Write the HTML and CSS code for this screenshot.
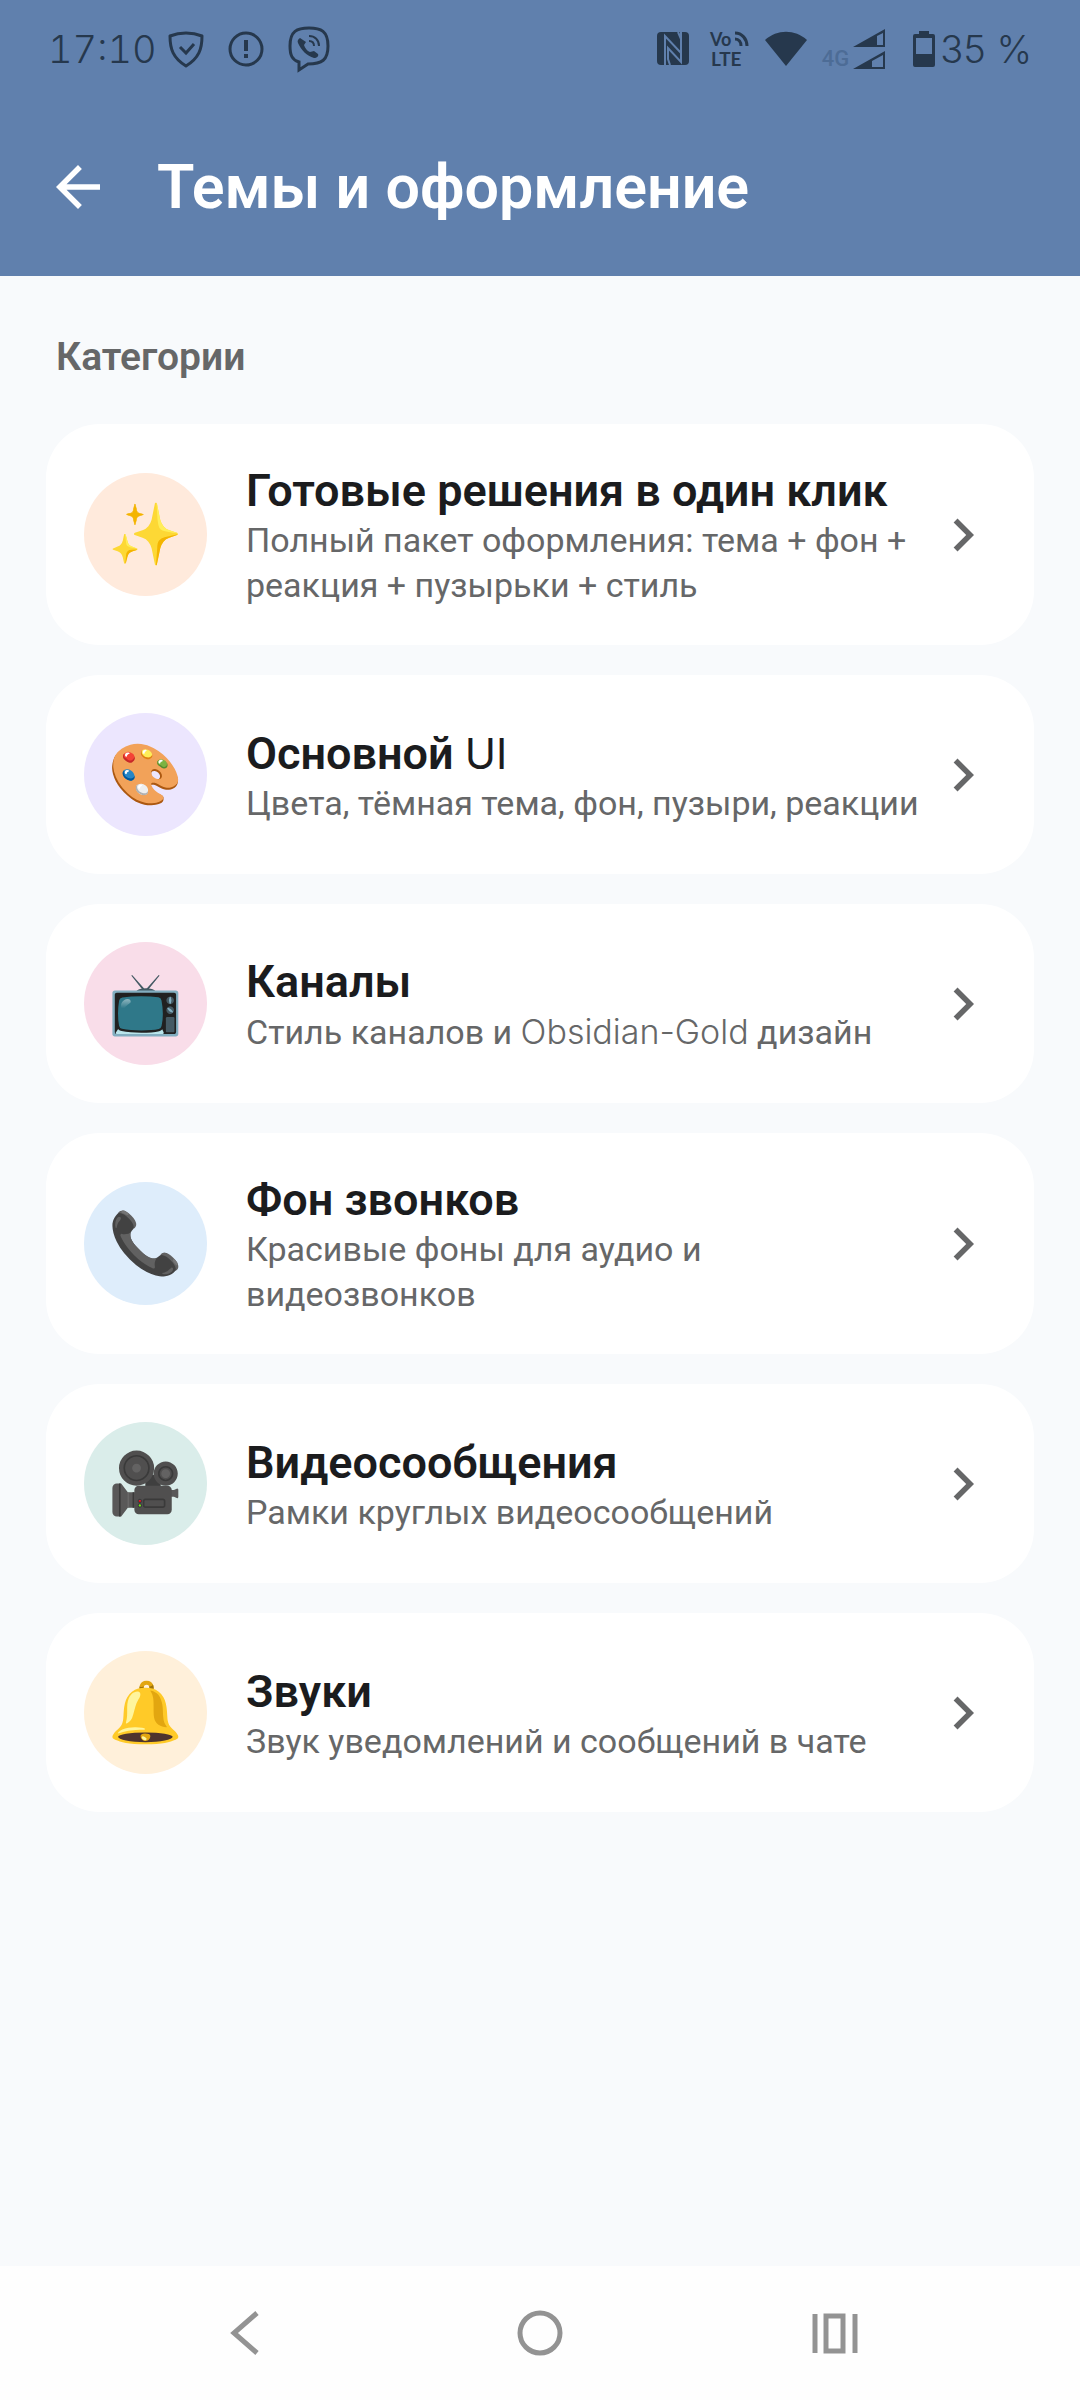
FILE: index.html
```html
<!DOCTYPE html>
<html lang="ru">
<head>
    <meta charset="UTF-8">
    <meta name="viewport" content="width=device-width, initial-scale=1.0">
    <title>Темы и оформление</title>
    <link rel="stylesheet" href="styles.css">
</head>
<body>
    <header class="header">
        <!-- Status bar -->
        <div class="status-bar">
            <span class="status-text time">17:10</span>
            <div class="notifications">
                <svg width="36" height="38" viewBox="0 0 36 38" fill="none" stroke="currentColor" stroke-width="3">
                    <path d="M18 3C24 3 29 4 34 6C34 19 31 28 18 36C5 28 2 19 2 6C7 4 12 3 18 3Z" stroke-linejoin="round"/>
                    <path d="M12 17l6 6 8-9"/>
                </svg>
                <svg width="36" height="38" viewBox="0 0 36 38" fill="none" stroke="currentColor" stroke-width="3">
                    <circle cx="18" cy="19" r="16"/>
                    <path d="M18 10v11M18 24v4" stroke-width="4"/>
                </svg>
                <svg width="42" height="46" viewBox="0 0 42 46" fill="none" stroke="currentColor" stroke-width="3">
                    <path d="M21 2C33 2 40 5 40 20C40 34 34 38 20 38L11 44V36C4 34 2 29 2 20C2 5 9 2 21 2Z"/>
                    <path d="M12 12c-2 1-3 3-2 5c3 7 9 13 16 15c3 0 5-2 4-4l-4-3l-4 1c-3-1-5-4-6-7l2-3z" fill="currentColor" stroke="none"/>
                    <path d="M21 10c6 0 10 4 10 10M21 15c3 0 5 2 5 5" stroke-width="2"/>
                </svg>
            </div>
            <div class="indicators">
                <svg class="nfc" width="34" height="34" viewBox="0 0 34 34">
                    <rect x="1" width="32" height="33" rx="4" fill="currentColor"/>
                    <path d="M9 33V4L25 21V7L22 0M25 0V30L12 16V27L14 33" fill="none" stroke="#6080ad" stroke-width="2"/>
                </svg>
                <svg class="volte" width="40" height="38" viewBox="0 0 40 38" fill="currentColor">
                    <text x="0" y="16" font-size="18">Vo</text>
                    <text x="1" y="36" font-size="19">LTE</text>
                    <path d="M25 3c7 0 12 6 12 13M25 9c4 0 6 3 6 7" fill="none" stroke="currentColor" stroke-width="3"/>
                </svg>
                <svg width="42" height="36" viewBox="0 0 42 36" fill="currentColor">
                    <path d="M0 9C12-2 30-2 42 9L21 35Z"/>
                </svg>
                <div class="mobile">
                    <span class="network">4G</span>
                    <svg width="32" height="42" viewBox="0 0 32 42" fill="currentColor" fill-rule="evenodd">
                        <path d="M0 19L32 1V19ZM24 17H30V5L24 8Z"/>
                        <path d="M0 41L32 23V41ZM19 39H30V27L19 33Z"/>
                    </svg>
                </div>
                <div class="battery">
                    <svg width="22" height="36" viewBox="0 0 22 36" fill="currentColor" fill-rule="evenodd">
                        <path d="M6 0H16V3H20Q22 3 22 5V34Q22 36 20 36H2Q0 36 0 34V5Q0 3 2 3H6ZM3 7V23H19V7Z"/>
                    </svg>
                    <span class="status-text">35 %</span>
                </div>
            </div>
        </div>

        <!-- Toolbar -->
        <div class="toolbar">
            <button class="back" aria-label="Назад">
                <svg width="66" height="66" viewBox="0 0 24 24" fill="currentColor">
                    <path d="M20 11H7.830l5.590-5.590L12 4l-8 8 8 8 1.410-1.410L7.830 13H20z"/>
                </svg>
            </button>
            <h1>Темы и оформление</h1>
        </div>
    </header>

    <main class="content">
        <h2>Категории</h2>

        <a class="card" href="#presets">
            <span class="icon orange">✨</span>
            <span class="text">
                <span class="title">Готовые решения в один клик</span>
                <span class="desc">Полный пакет оформления: тема + фон + реакция + пузырьки + стиль</span>
            </span>
            <svg class="chevron" viewBox="0 0 24 24"><path d="M8.590 16.590L13.170 12 8.590 7.410 10 6l6 6-6 6z"/></svg>
        </a>

        <a class="card" href="#ui">
            <span class="icon violet">🎨</span>
            <span class="text">
                <span class="title">Основной <span class="latin">UI</span></span>
                <span class="desc">Цвета, тёмная тема, фон, пузыри, реакции</span>
            </span>
            <svg class="chevron" viewBox="0 0 24 24"><path d="M8.590 16.590L13.170 12 8.590 7.410 10 6l6 6-6 6z"/></svg>
        </a>

        <a class="card" href="#channels">
            <span class="icon pink">📺</span>
            <span class="text">
                <span class="title">Каналы</span>
                <span class="desc">Стиль каналов и <span class="latin">Obsidian-Gold</span> дизайн</span>
            </span>
            <svg class="chevron" viewBox="0 0 24 24"><path d="M8.590 16.590L13.170 12 8.590 7.410 10 6l6 6-6 6z"/></svg>
        </a>

        <a class="card" href="#calls">
            <span class="icon blue">📞</span>
            <span class="text">
                <span class="title">Фон звонков</span>
                <span class="desc">Красивые фоны для аудио и видеозвонков</span>
            </span>
            <svg class="chevron" viewBox="0 0 24 24"><path d="M8.590 16.590L13.170 12 8.590 7.410 10 6l6 6-6 6z"/></svg>
        </a>

        <a class="card" href="#video">
            <span class="icon green">🎥</span>
            <span class="text">
                <span class="title">Видеосообщения</span>
                <span class="desc">Рамки круглых видеосообщений</span>
            </span>
            <svg class="chevron" viewBox="0 0 24 24"><path d="M8.590 16.590L13.170 12 8.590 7.410 10 6l6 6-6 6z"/></svg>
        </a>

        <a class="card" href="#sounds">
            <span class="icon yellow">🔔</span>
            <span class="text">
                <span class="title">Звуки</span>
                <span class="desc">Звук уведомлений и сообщений в чате</span>
            </span>
            <svg class="chevron" viewBox="0 0 24 24"><path d="M8.590 16.590L13.170 12 8.590 7.410 10 6l6 6-6 6z"/></svg>
        </a>
    </main>

    <!-- System navigation -->
    <nav class="nav-bar">
        <button aria-label="Назад">
            <svg width="46" height="46" viewBox="0 0 46 46"><path d="M35 3L12 23l23 20" stroke-width="5"/></svg>
        </button>
        <button aria-label="Домой">
            <svg width="46" height="46" viewBox="0 0 46 46"><circle cx="23" cy="23" r="20" stroke-width="5"/></svg>
        </button>
        <button aria-label="Недавние">
            <svg width="46" height="46" viewBox="0 0 46 46"><path d="M3 4v39M43 4v39M14 6h17v35H14z" stroke-width="5"/></svg>
        </button>
    </nav>
</body>
</html>
```

FILE: styles.css
```css
body {
    font-family: Roboto, "Noto Sans", sans-serif;
    margin: 0;
    min-height: 100vh;
    display: flex;
    flex-direction: column;
    background-color: #f8fafc;
}

button {
    padding: 0;
    border: none;
    background: none;
    color: inherit;
    cursor: pointer;
}

svg {
    display: block;
    flex-shrink: 0;
    overflow: visible;
}

.header {
    background-color: #6080ad;
    color: white;
}

/* Status bar */
.status-bar {
    display: flex;
    align-items: center;
    height: 98px;
    padding: 0 48px;
    color: #26384d;
}

.status-text {
    font-family: Inter, sans-serif;
    font-size: 38px;
    font-weight: 300;
    white-space: nowrap;
}

.time {
    font-variant-numeric: tabular-nums;
}

.notifications {
    display: flex;
    align-items: center;
    gap: 24px;
    margin-left: 11px;
}

.indicators {
    display: flex;
    align-items: center;
    gap: 15px;
    margin-left: auto;
}

.nfc {
    margin-right: 5px;
}

.volte {
    font-family: Lato, sans-serif;
    font-weight: 700;
}

.mobile {
    display: flex;
    align-items: flex-end;
    gap: 4px;
}

.network {
    color: #4d6c96;
    font-size: 22px;
    font-weight: 500;
    line-height: 22px;
}

.battery {
    display: flex;
    align-items: center;
    gap: 5px;
    margin-left: 13px;
}

/* Toolbar */
.toolbar {
    display: flex;
    align-items: center;
    gap: 46px;
    padding: 56px 45px;
}

.toolbar h1 {
    margin: 0;
    font-size: 61px;
    font-weight: 600;
    line-height: 66px;
}

/* Categories */
.content {
    flex-grow: 1;
    display: flex;
    flex-direction: column;
    gap: 30px;
    padding: 55px 46px;
}

.content h2 {
    margin: 0 10px 11px;
    color: #666768;
    font-size: 39px;
    font-weight: 600;
    line-height: 52px;
}

.card {
    display: flex;
    align-items: center;
    padding: 37px 38px;
    border-radius: 54px;
    background-color: white;
    text-decoration: none;
}

.icon {
    display: flex;
    flex-shrink: 0;
    align-items: center;
    justify-content: center;
    width: 123px;
    height: 123px;
    margin: 1px 39px 1px 0;
    border-radius: 50%;
    font-size: 60px;
}

.orange { background-color: #ffeadc; }
.violet { background-color: #ece6fe; }
.pink { background-color: #f9dde9; }
.blue { background-color: #deedfb; }
.green { background-color: #daedea; }
.yellow { background-color: #fff0da; }

.text {
    flex: 1;
    display: flex;
    flex-direction: column;
    padding-top: 2px;
}

.title {
    color: #1b1c1e;
    font-size: 45px;
    font-weight: 600;
    line-height: 55px;
}

.desc {
    color: #666768;
    font-size: 34px;
    line-height: 45px;
}

.latin {
    font-family: Inter, sans-serif;
    font-weight: 300;
}

.title .latin {
    font-size: 42px;
    font-weight: 400;
}

.chevron {
    width: 66px;
    height: 66px;
    fill: #666768;
}

/* Navigation bar */
.nav-bar {
    display: flex;
    align-items: center;
    justify-content: center;
    gap: 249px;
    height: 134px;
    background-color: #fefefe;
}

.nav-bar svg {
    fill: none;
    stroke: #939393;
}
```
